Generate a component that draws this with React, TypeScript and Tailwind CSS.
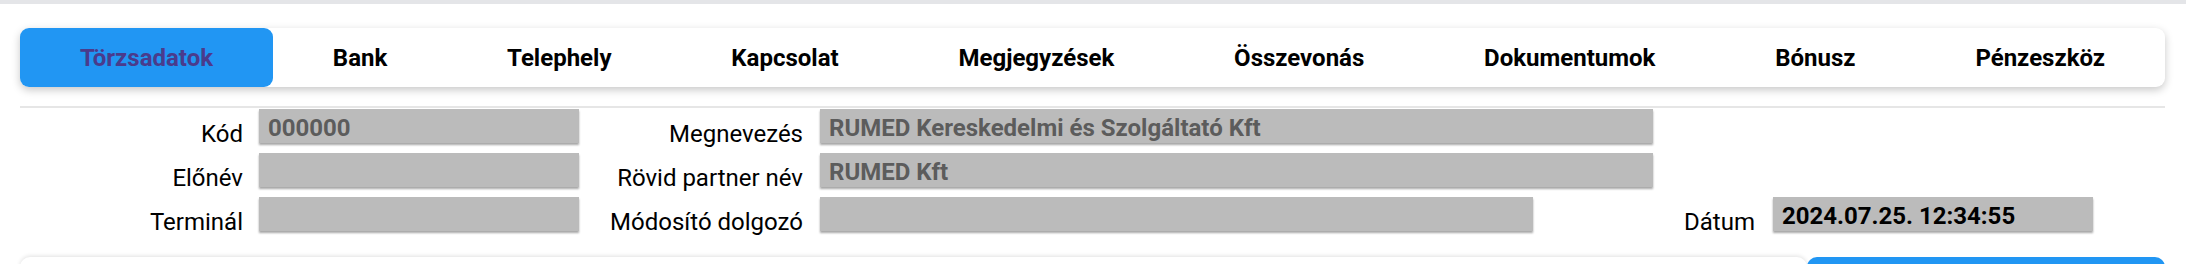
import React from "react";

const TABS = [
  "Törzsadatok",
  "Bank",
  "Telephely",
  "Kapcsolat",
  "Megjegyzések",
  "Összevonás",
  "Dokumentumok",
  "Bónusz",
  "Pénzeszköz",
];

function Field({ value, width, dark }: { value?: string; width: string; dark?: boolean }) {
  return (
    <div
      className={`${width} h-[34px] shrink-0 bg-[#bbbbbb] pl-[9px] pt-[6px] leading-[26px] font-bold whitespace-nowrap shadow-[0_2px_2px_rgba(0,0,0,0.35)] ${
        dark ? "text-black" : "text-[#5c5c5c]"
      }`}
    >
      {value}
    </div>
  );
}

function Label({ text, width }: { text: string; width: string }) {
  return (
    <div className={`${width} shrink-0 pt-[12px] leading-[26px] text-right whitespace-nowrap text-black`}>
      {text}
    </div>
  );
}

export default function App() {
  const active = 0;
  return (
    <div className="w-[2186px] h-[264px] overflow-hidden bg-white font-['Roboto',sans-serif] text-[24px]">
      <div className="h-[4px] bg-[#e4e5e8]" />
      <div className="pl-[20px] pr-[21px]">
        {/* tabs */}
        <div className="mt-[24px] flex h-[59px] rounded-[9px] bg-white shadow-[0_3px_8px_rgba(0,0,0,0.22)]">
          {TABS.map((t, i) => (
            <div
              key={t}
              className={`flex flex-auto items-center justify-center font-bold whitespace-nowrap ${
                i === active ? "rounded-[9px] bg-[#2196f3] text-[#4a3b8c]" : "text-black"
              }`}
            >
              {t}
            </div>
          ))}
        </div>

        <div className="mt-[19px] h-[2px] bg-[#e6e6e6]" />

        {/* form */}
        <div className="mt-[1px] flex flex-col gap-[10px]">
          <div className="flex h-[34px] items-start">
            <Label text="Kód" width="w-[223px]" />
            <div className="w-[16px]" />
            <Field value="000000" width="w-[320px]" />
            <Label text="Megnevezés" width="w-[224px]" />
            <div className="w-[17px]" />
            <Field value="RUMED Kereskedelmi és Szolgáltató Kft" width="w-[833px]" />
          </div>
          <div className="flex h-[34px] items-start">
            <Label text="Előnév" width="w-[223px]" />
            <div className="w-[16px]" />
            <Field width="w-[320px]" />
            <Label text="Rövid partner név" width="w-[224px]" />
            <div className="w-[17px]" />
            <Field value="RUMED Kft" width="w-[833px]" />
          </div>
          <div className="flex h-[34px] items-start">
            <Label text="Terminál" width="w-[223px]" />
            <div className="w-[16px]" />
            <Field width="w-[320px]" />
            <Label text="Módosító dolgozó" width="w-[224px]" />
            <div className="w-[17px]" />
            <Field width="w-[713px]" />
            <Label text="Dátum" width="w-[222px]" />
            <div className="w-[18px]" />
            <Field value="2024.07.25. 12:34:55" width="w-[320px]" dark />
          </div>
        </div>

        {/* bottom card + button */}
        <div className="mt-[26px] flex h-[40px]">
          <div className="flex-1 rounded-t-[10px] bg-white shadow-[0_-1px_4px_rgba(0,0,0,0.12)]" />
          <div className="w-[358px] rounded-t-[10px] bg-[#2196f3]" />
        </div>
      </div>
    </div>
  );
}
